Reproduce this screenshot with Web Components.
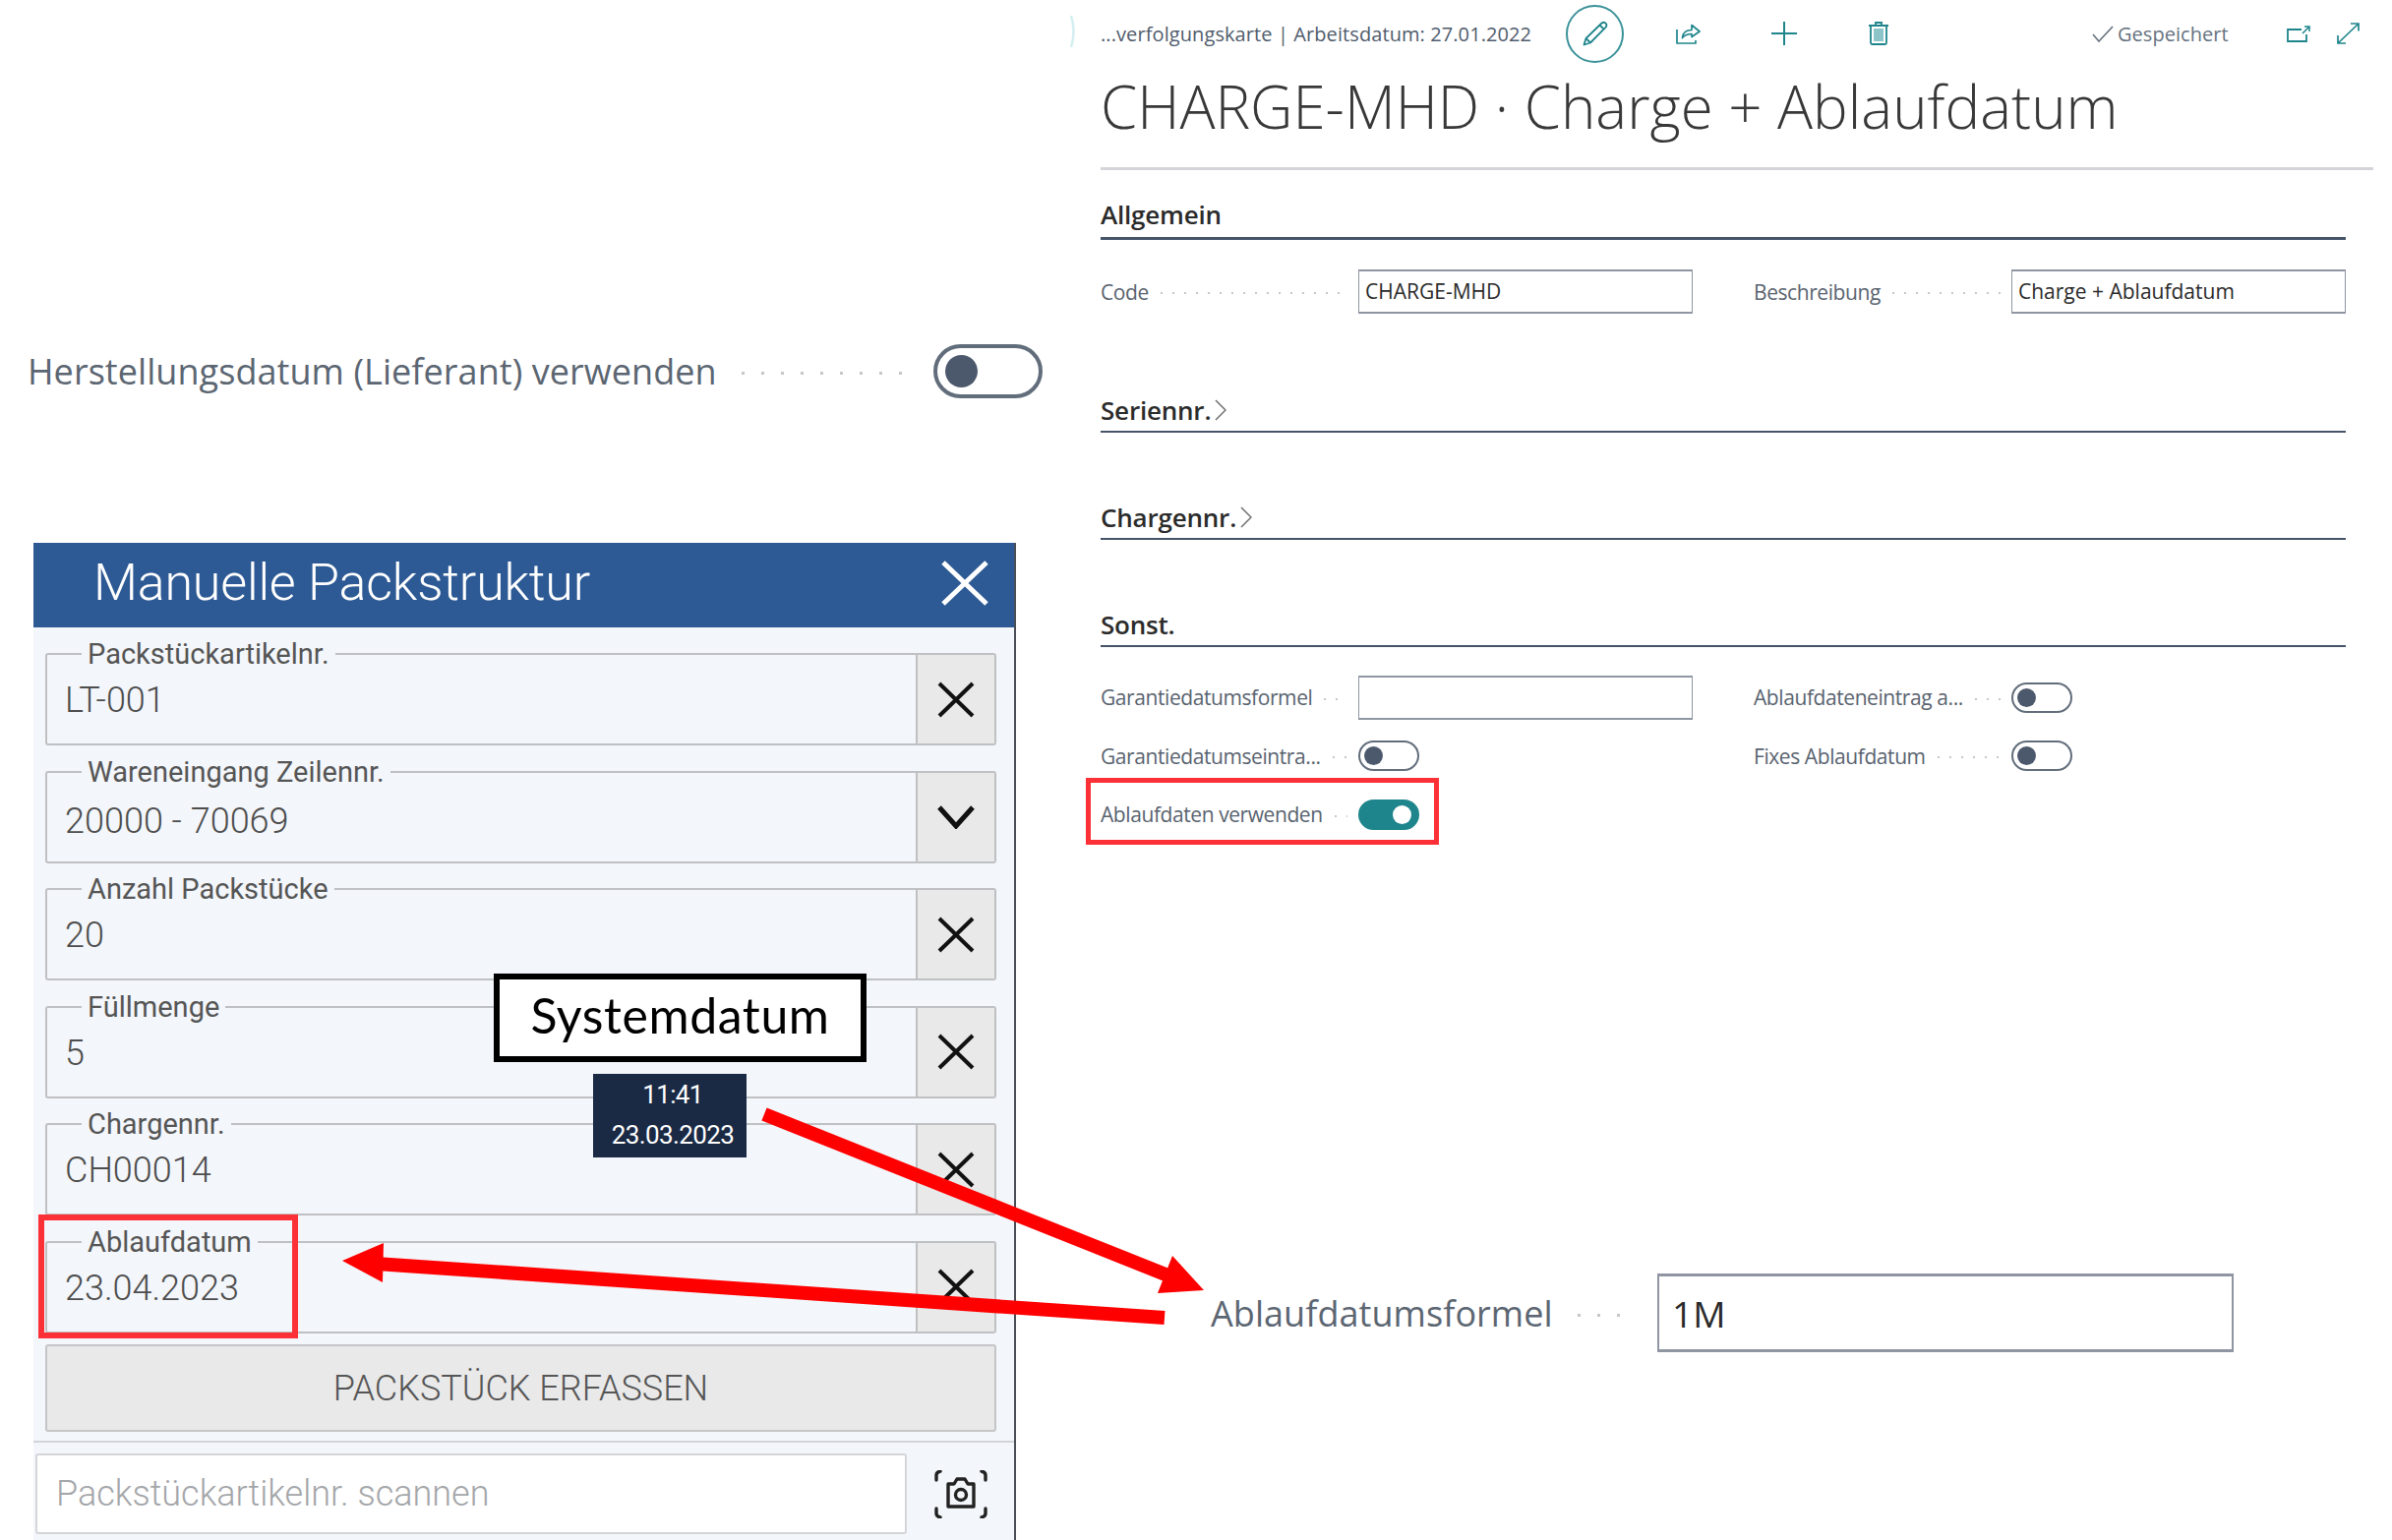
<!DOCTYPE html>
<html lang="de">
<head>
<meta charset="utf-8">
<title>Charge + Ablaufdatum</title>
<style>
html,body{margin:0;padding:0;background:#fff;overflow:hidden}
app-canvas>*{position:absolute}
#bc{left:1085px;top:0}
#mfg{left:28px;top:350px}
#dlg{left:34px;top:552px}
#formula{left:1231px;top:1295px}
#redA{left:1104px;top:791px;width:359px;height:68px;--w:5px}
#redB{left:39px;top:1235px;width:264px;height:126px;--w:6px}
#sys{left:502px;top:990px}
#tip{left:603px;top:1092px}
#arrows{left:0;top:0}
</style>
</head>
<body>
<app-canvas>
  <bc-page id="bc">
    <bc-section slot="sections" first>
      <span slot="head">Allgemein</span>
      <bc-field><span slot="label">Code</span><bc-input>CHARGE-MHD</bc-input></bc-field>
      <bc-field><span slot="label">Beschreibung</span><bc-input>Charge + Ablaufdatum</bc-input></bc-field>
    </bc-section>
    <bc-section slot="sections" collapsed gap82><span slot="head">Seriennr.</span></bc-section>
    <bc-section slot="sections" collapsed><span slot="head">Chargennr.</span></bc-section>
    <bc-section slot="sections">
      <span slot="head">Sonst.</span>
      <bc-field><span slot="label">Garantiedatumsformel</span><bc-input></bc-input></bc-field>
      <bc-field><span slot="label">Ablaufdateneintrag a...</span><bc-toggle></bc-toggle></bc-field>
      <bc-field><span slot="label">Garantiedatumseintra...</span><bc-toggle></bc-toggle></bc-field>
      <bc-field><span slot="label">Fixes Ablaufdatum</span><bc-toggle></bc-toggle></bc-field>
      <bc-field><span slot="label">Ablaufdaten verwenden</span><bc-toggle on></bc-toggle></bc-field>
    </bc-section>
  </bc-page>

  <big-row id="mfg" style="width:1032px;height:55px;--col:921px"><span slot="label">Herstellungsdatum (Lieferant) verwenden</span><bc-toggle large></bc-toggle></big-row>

  <pack-dialog id="dlg">
    <span slot="title">Manuelle Packstruktur</span>
    <pack-field icon="x"><span slot="label">Packstückartikelnr.</span>LT-001</pack-field>
    <pack-field icon="chevron"><span slot="label">Wareneingang Zeilennr.</span>20000 - 70069</pack-field>
    <pack-field icon="x"><span slot="label">Anzahl Packstücke</span>20</pack-field>
    <pack-field icon="x"><span slot="label">Füllmenge</span>5</pack-field>
    <pack-field icon="x"><span slot="label">Chargennr.</span>CH00014</pack-field>
    <pack-field icon="x"><span slot="label">Ablaufdatum</span>23.04.2023</pack-field>
    <span slot="action">PACKSTÜCK ERFASSEN</span>
    <span slot="placeholder">Packstückartikelnr. scannen</span>
  </pack-dialog>

  <big-row id="formula" style="width:1040px;height:80px;--col:454px"><span slot="label">Ablaufdatumsformel</span><bc-input large>1M</bc-input></big-row>

  <red-frame id="redA"></red-frame>
  <red-frame id="redB"></red-frame>
  <callout-box id="sys">Systemdatum</callout-box>
  <clock-tip id="tip"><span>11:41</span><span>23.03.2023</span></clock-tip>
  <red-arrows id="arrows"></red-arrows>
</app-canvas>

<script>
function def(name, html, init){
  customElements.define(name, class extends HTMLElement{
    constructor(){super();this.attachShadow({mode:'open'}).innerHTML=html;}
    connectedCallback(){ if(init) init(this); }
  });
}
const TEAL='#1f858c';
def('app-canvas',`<style>:host{display:block;position:relative;width:2432px;height:1566px;overflow:hidden;background:#fff}</style><slot></slot>`);

def('bc-page',`<style>
:host{display:block;padding-left:34px;box-sizing:content-box;width:1294px;font-family:"Open Sans",sans-serif;color:#333}
.bar{display:flex;align-items:center;height:68px;position:relative}
.arc{position:absolute;left:-31px;top:15px}
.crumb{width:473px;flex:none;font-size:20px;letter-spacing:.09px;color:#505c6c;white-space:nowrap}
svg{display:block;flex:none}
.ed{width:59px;height:59px;border:2px solid #3b9299;border-radius:50%;box-sizing:border-box;display:flex;align-items:center;justify-content:center;flex:none}
.saved{display:flex;align-items:center;flex:none;width:139px;margin-left:207px;font-size:20px;letter-spacing:.05px;color:#66727f;white-space:nowrap}
.saved svg{margin-right:4px}
h1{margin:0;font-weight:300;font-size:60px;line-height:80px;height:80px;letter-spacing:0;color:#383838;white-space:nowrap}
.rule{height:3px;margin-top:22px;background:#d3d5da}
.secs{width:1266px;display:flex;flex-direction:column}
</style>
<div class="bar">
  <svg class="arc" width="6" height="34" viewBox="0 0 6 34"><path d="M1 1Q6 17 1 33" fill="none" stroke="#d3eef0" stroke-width="2.5"/></svg>
  <span class="crumb">...verfolgungskarte | Arbeitsdatum: 27.01.2022</span>
  <span class="ed"><svg width="26" height="26" viewBox="0 0 26 26" fill="none" stroke="${TEAL}" stroke-width="1.8" stroke-linejoin="round"><path d="M1.5 24.5 3.5 18 19.5 2.5Q21.5 1 23.5 2.6 25.3 4.6 23.6 6.6L8 22.5ZM3.5 18 8 22.5M17.5 4.5 21.8 8.8"/></svg></span>
  <svg style="margin-left:53px" width="25" height="21" viewBox="0 0 25 21" fill="none" stroke="${TEAL}" stroke-width="1.7" stroke-linejoin="round"><path d="M1 6V20H20V17"/><path d="M6.5 14.5C7 9 11 6.5 16 6.5V1.5L24 8 16 13.5V10.5C12 10.5 9 11.5 6.5 14.5Z"/></svg>
  <svg style="margin-left:72px" width="26" height="24" viewBox="0 0 26 24" stroke="${TEAL}" stroke-width="2"><path d="M0 12H26M13 0V24"/></svg>
  <svg style="margin-left:73px" width="20" height="24" viewBox="0 0 20 24" fill="none" stroke="${TEAL}" stroke-width="1.8"><path d="M0 4H20M7 4V1H13V4"/><path d="M2 4V21.5Q2 23 3.5 23H16.5Q18 23 18 21.5V4"/><rect x="5" y="7" width="10" height="13" fill="#8cc4c8" stroke="none"/></svg>
  <span class="saved"><svg width="22" height="17" viewBox="0 0 22 17" fill="none" stroke="#66727f" stroke-width="1.6"><path d="M1 9 7 16 21 1"/></svg>Gespeichert</span>
  <svg style="margin-left:59px" width="24" height="17" viewBox="0 0 24 17" fill="none" stroke="${TEAL}" stroke-width="1.8"><path d="M15 4H1V16H20V9"/><path d="M16 8 23 1M18 1H23V6" stroke-width="1.5"/></svg>
  <svg style="margin-left:27px" width="23" height="22" viewBox="0 0 23 22" fill="none" stroke="${TEAL}" stroke-width="1.7"><path d="M1.5 20.5 21.5 1.5M14 1H22V8.5M1 13V21H9"/></svg>
</div>
<h1>CHARGE-MHD · Charge + Ablaufdatum</h1>
<div class="rule"></div>
<div class="secs"><slot name="sections"></slot></div>`);

def('bc-section',`<style>
:host{display:block;margin-top:67px}
:host([first]){margin-top:28px}
:host([gap82]){margin-top:79px}
.h{height:40px;border-bottom:2px solid #465468;display:flex;align-items:center;font-size:26px;font-weight:600;letter-spacing:-.2px;color:#2b2b2b}
:host([first]) .h{border-bottom-width:3px}
.t{position:relative;top:-1px}
:host([first]) .t{top:-3px}
.chev{display:none;margin-left:4px;position:relative;top:-1px}
:host([collapsed]) .chev{display:block}
.g{display:grid;grid-template-columns:602px 602px;column-gap:62px;row-gap:14.5px;padding-top:28.5px}
:host([first]) .g{padding-top:30px}
:host([collapsed]) .g{display:none}
</style>
<div class="h"><span class="t"><slot name="head"></slot></span>
<svg class="chev" width="12" height="22" viewBox="0 0 12 22" fill="none" stroke="#707070" stroke-width="1.5"><path d="M1 1 11 11 1 21"/></svg></div>
<div class="g"><slot></slot></div>`);

def('bc-field',`<style>
:host{display:flex;align-items:center;height:45px;font-size:21px;letter-spacing:-.42px;color:#59636f}
.l{width:262px;flex:none;display:flex;align-items:center;white-space:nowrap}
.d{flex:1;min-width:0;height:2px;margin:3px 11px 0 12px;background:repeating-linear-gradient(90deg,#c5c7ca 0 2px,transparent 2px 12px)}
</style><div class="l"><slot name="label"></slot><span class="d"></span></div><slot></slot>`);

def('bc-input',`<style>
:host{display:block;flex:1;height:45px;box-sizing:border-box;border:1px solid #8f96a2;border-top-width:2px;border-bottom-width:2px;background:#fff;padding-left:6px;line-height:40px;font-size:21px;letter-spacing:0;color:#2a2a2a;white-space:nowrap}
:host([large]){height:80px;padding-left:13px;line-height:76px;font-size:37px;letter-spacing:0;border-width:3px 2px}
</style><slot></slot>`);

def('bc-toggle',`<style>
:host{display:block;flex:none;position:relative;box-sizing:border-box;width:62px;height:31px;border:2px solid #626d7b;border-radius:16px;background:#fff}
i{position:absolute;left:4px;top:4px;width:19px;height:19px;border-radius:50%;background:#4c596c}
:host([on]){background:${TEAL};border-color:${TEAL}}
:host([on]) i{left:auto;right:6px;background:#fff}
:host([large]){width:111px;height:55px;border-width:4px;border-radius:28px}
:host([large]) i{left:8px;top:7px;width:33px;height:33px}
</style><i></i>`);

def('big-row',`<style>
:host{display:flex;align-items:center;font-family:"Open Sans",sans-serif;font-size:36px;letter-spacing:.06px;color:#5c6672}
.l{flex:none;width:var(--col);display:flex;align-items:center;white-space:nowrap}
.d{flex:1;min-width:0;height:3px;margin:4px 30px 0 25px;background:repeating-linear-gradient(90deg,#c5c7ca 0 3px,transparent 3px 20px)}
</style><div class="l"><slot name="label"></slot><span class="d"></span></div><slot></slot>`);

def('pack-dialog',`<style>
:host{display:block;width:999px;height:1014px;box-sizing:border-box;border-right:2px solid #4a4f57;background:#f3f6fa;font-family:Roboto,sans-serif;overflow:hidden}
header{height:86px;box-sizing:border-box;padding:0 26px 5px 61px;background:#2d5a94;display:flex;align-items:center;justify-content:space-between;color:#fff;font-weight:300;font-size:52px;letter-spacing:-.2px;white-space:nowrap}
header svg{display:block}
.f{display:flex;flex-direction:column;row-gap:25.6px;padding:26px 18px 0 12px}
.act{margin:11.5px 18px 0 12px;height:88.5px;box-sizing:border-box;border:2px solid #c4c5c7;border-radius:3px;background:#e9e9e9;display:flex;align-items:center;justify-content:center;font-size:36px;font-weight:300;color:#555;white-space:nowrap}
.scan{margin-top:9.5px;border-top:2px solid #d2d4d8;padding:11px 0 0 2px;display:flex;align-items:flex-start}
.in{width:886px;height:82px;box-sizing:border-box;border:2px solid #d4d5d8;border-radius:3px;background:#fff;padding-left:19px;display:flex;align-items:center;font-size:36px;font-weight:300;color:#a4a6a9;white-space:nowrap}
.cam{margin:17px 0 0 28px}
</style>
<header><slot name="title"></slot><svg width="48" height="46" viewBox="0 0 48 46" stroke="#fff" stroke-width="5"><path d="M2 2 46 44M46 2 2 44"/></svg></header>
<div class="f"><slot></slot></div>
<div class="act"><slot name="action"></slot></div>
<div class="scan"><div class="in"><slot name="placeholder"></slot></div>
<svg class="cam" width="54" height="49" viewBox="0 0 54 49" fill="none" stroke="#222" stroke-width="3.4" stroke-linecap="round" stroke-linejoin="round"><path d="M2 10V5Q2 2 6 1M52 10V5Q52 2 48 1M2 39V44Q2 47 6 48M52 39V44Q52 47 48 48"/><path d="M14 14H20L23 9H31L34 14H40V37H14Z"/><circle cx="27" cy="25" r="5.5"/></svg></div>`);

def('pack-field',`<style>
:host{display:flex;position:relative;height:94px;box-sizing:border-box;border:2px solid #bfc0c3;border-radius:3px;font-weight:300;font-size:36px;color:#4d4d4d}
.v{flex:1;display:flex;align-items:center;padding:2px 0 0 18px;white-space:nowrap}
:host([icon=chevron]) .v{padding-top:8px}
.b{width:78px;flex:none;border-left:2px solid #bfc0c3;background:#e9e9e9;display:flex;align-items:center;justify-content:center}
.lb{position:absolute;left:35px;top:-17px;padding:0 6px;background:#f3f6fa;font-size:29px;font-weight:400;line-height:32px;color:#555;white-space:nowrap}
svg{display:block}
</style>
<span class="lb"><slot name="label"></slot></span>
<div class="v"><slot></slot></div>
<div class="b"></div>`,
(el)=>{
  const b=el.shadowRoot.querySelector('.b');
  if(b.firstChild) return;
  b.innerHTML = el.getAttribute('icon')==='chevron'
   ? '<svg width="38" height="24" viewBox="0 0 38 24" fill="none" stroke="#111" stroke-width="5"><path d="M2 2 19 21 36 2"/></svg>'
   : '<svg width="38" height="37" viewBox="0 0 38 37" fill="none" stroke="#111" stroke-width="4"><path d="M2 2 36 35M36 2 2 35"/></svg>';
});

def('red-frame',`<style>:host{display:block;box-sizing:border-box;border:var(--w) solid #fb3137}</style>`);

def('callout-box',`<style>:host{display:flex;align-items:center;justify-content:center;width:379px;height:90px;box-sizing:border-box;border:6px solid #000;background:#fff;font-family:Lato,sans-serif;font-size:50px;padding-bottom:6px;letter-spacing:.6px;color:#000}</style><slot></slot>`);

def('clock-tip',`<style>:host{display:flex;flex-direction:column;align-items:center;justify-content:center;width:156px;height:85px;background:#1a2a44;color:#fff;font-family:Roboto,sans-serif;font-size:26px;line-height:41px;letter-spacing:-.6px;text-align:center;padding-left:6px;padding-bottom:2px;box-sizing:border-box}</style><slot></slot>`);

def('red-arrows',`<style>:host{display:block;width:2432px;height:1566px;pointer-events:none}svg{display:block}</style>
<svg width="2432" height="1566" viewBox="0 0 2432 1566" fill="#ff0000" stroke="none">
<path d="M777 1133 1195 1300" stroke="#ff0000" stroke-width="14" fill="none"/>
<polygon points="1224,1312 1192,1277 1177,1315"/>
<path d="M1184 1340 382 1285" stroke="#ff0000" stroke-width="14" fill="none"/>
<polygon points="348,1282 390,1264 389,1304"/>
</svg>`);
</script>
</body>
</html>
